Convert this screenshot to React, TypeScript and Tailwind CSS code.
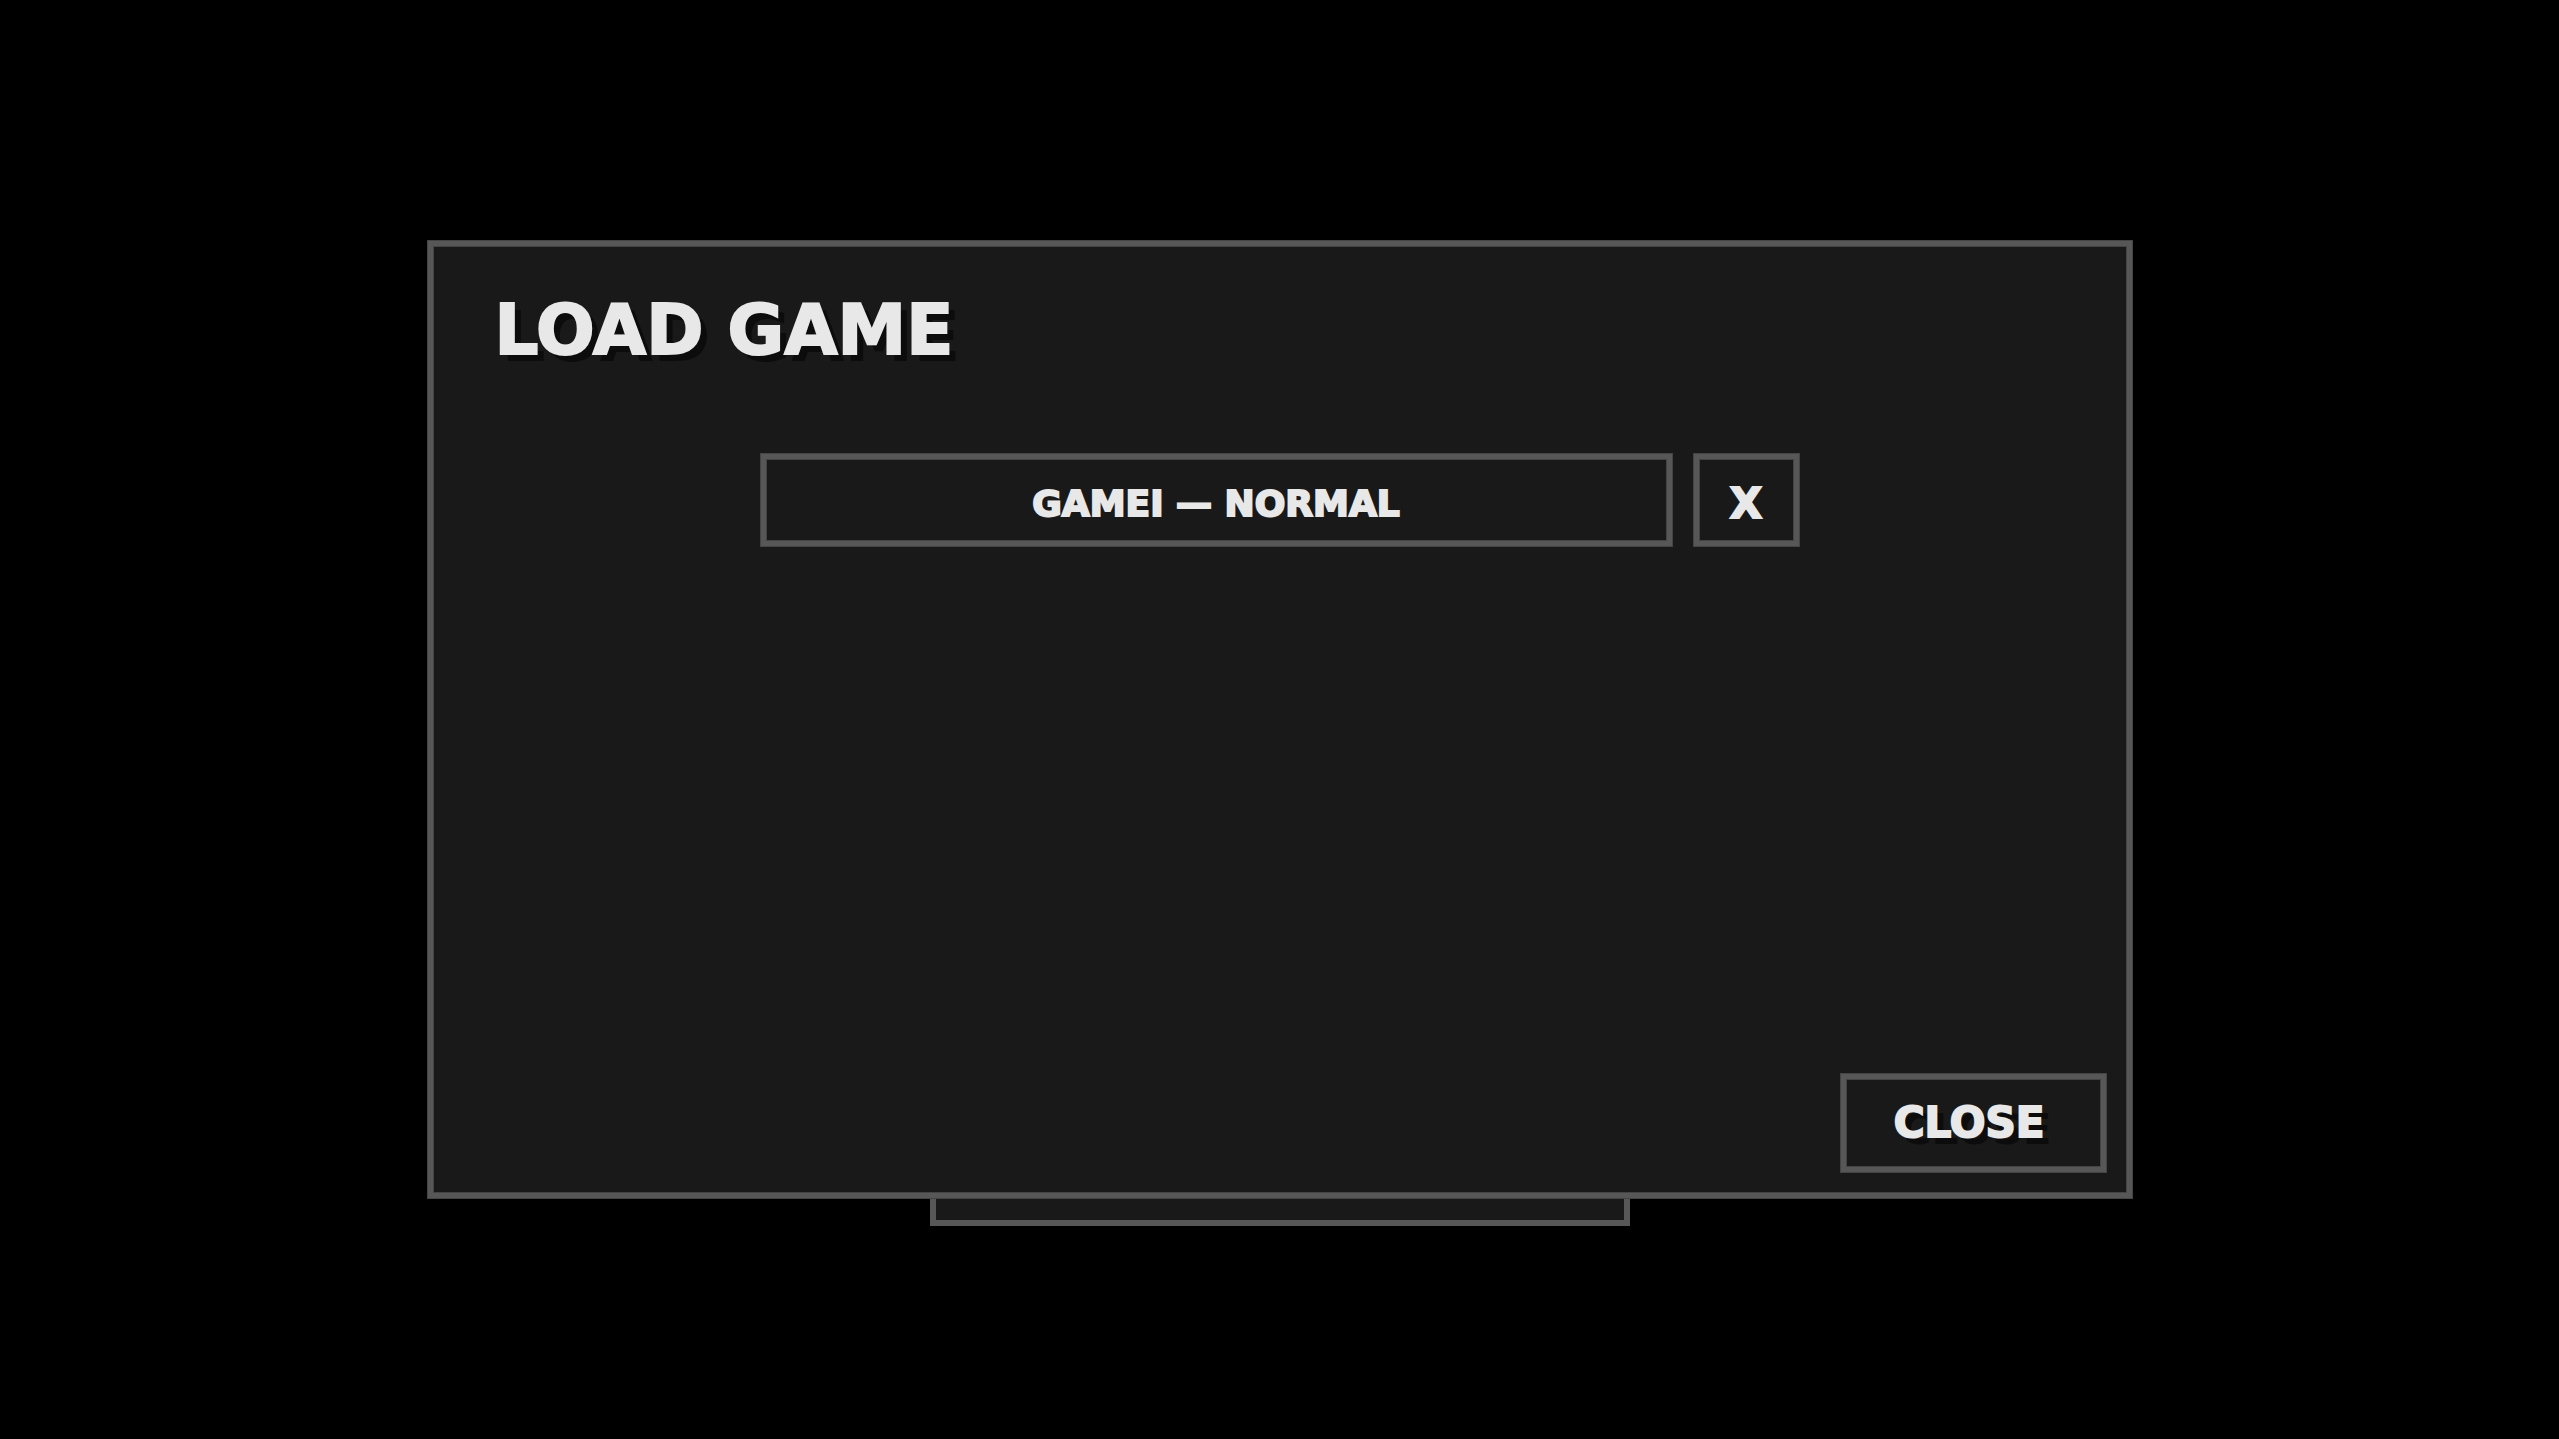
import type { ButtonHTMLAttributes } from "react";
import clsx from "clsx";

const frame =
  "border-[6px] border-[#575757] bg-[#191919] outline-1 -outline-offset-1 outline-[#444444] shadow-[inset_0_0_0_1px_#444444]";

function FrameButton({ className, ...props }: ButtonHTMLAttributes<HTMLButtonElement>) {
  return (
    <button
      type="button"
      className={clsx(
        frame,
        "flex cursor-pointer items-center justify-center font-bold leading-none hover:bg-[#262626] [-webkit-text-stroke:2px_#e8e8e8]",
        className,
      )}
      {...props}
    />
  );
}

const saves = [{ id: 1, label: "GAMEI — NORMAL" }];

export default function App() {
  return (
    <main className="flex min-h-screen flex-col items-center justify-center bg-black pt-[27px] font-['DejaVu_Sans',sans-serif] text-[#e8e8e8]">
      <section
        aria-labelledby="dialog-title"
        className={clsx(frame, "flex min-h-[66.7vh] w-2/3 flex-col p-5")}
      >
        <h1
          id="dialog-title"
          className="px-[42px] pt-[30px] text-[69px] font-bold leading-[68px] [-webkit-text-stroke:2px_#e8e8e8] [text-shadow:7px_7px_0_#0c0c0c]"
        >
          LOAD GAME
        </h1>

        <ul className="mx-auto mt-[89px] flex w-full max-w-[1040px] flex-col gap-5">
          {saves.map((save) => (
            <li key={save.id} className="flex gap-5">
              <FrameButton className="h-[94px] flex-1 pt-2 text-[36px]">{save.label}</FrameButton>
              <FrameButton className="h-[94px] w-[107px] pt-2 text-[42px]" aria-label="Delete save">
                X
              </FrameButton>
            </li>
          ))}
        </ul>

        <FrameButton className="mt-auto h-[100px] w-[267px] self-end pr-2 text-[42px] [text-shadow:7px_7px_0_#0c0c0c]">
          CLOSE
        </FrameButton>
      </section>

      <div className="h-[27px] w-[700px] border-x-[6px] border-b-[6px] border-[#575757] bg-[#191919]" />
    </main>
  );
}
